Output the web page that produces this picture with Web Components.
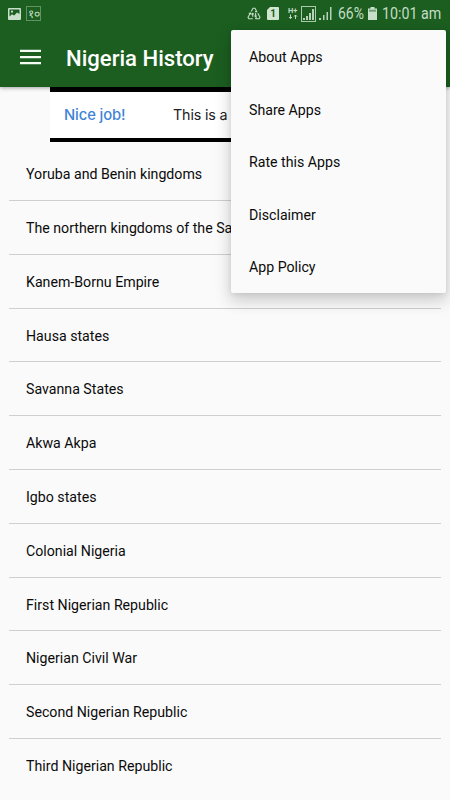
<!DOCTYPE html>
<html lang="en">
<head>
<meta charset="utf-8">
<title>Nigeria History</title>
<style>
html,body{margin:0;height:100%;overflow:hidden;background:#fafafa}
body{font-family:Roboto,"Liberation Sans",sans-serif;color:#0b0b0b}
</style>
</head>
<body>
<app-screen></app-screen>
<script>
const define = (name, html, setup) => customElements.define(name, class extends HTMLElement {
  constructor() {
    super();
    const t = document.createElement('template');
    t.innerHTML = html;
    this.attachShadow({mode: 'open'}).appendChild(t.content.cloneNode(true));
  }
  connectedCallback() { if (setup) setup(this, this.shadowRoot); }
});

define('status-bar', `
<style>
:host{display:flex;height:27px;box-sizing:border-box;padding:0 9px 0 8px;align-items:center;color:#c3dcc4;font-size:16px;line-height:29px;white-space:nowrap}
svg{display:block;flex:none}
.box{box-sizing:border-box;width:15px;height:15px;margin-left:5px;border:1px solid #5f9462;font-size:12px;line-height:14px;text-align:center;overflow:hidden;display:flex;justify-content:center}
.sp{flex:1}
.num{box-sizing:border-box;width:12px;height:13px;margin-left:6px;background:#d0e6d0;color:#1b5e20;font-weight:700;font-size:10px;line-height:14px;text-align:center;border-radius:1px;clip-path:polygon(3px 0,100% 0,100% 100%,0 100%,0 3px)}
.net{margin-left:9px;width:10px;display:flex;flex-direction:column;font-size:7.5px;line-height:7px;font-weight:700}
.pct{margin-left:5px;width:26px;transform:scaleX(.87);transform-origin:0 50%}
.time{margin-left:5px;width:59px;transform:scaleX(.89);transform-origin:0 50%}
</style>
<svg width="13" height="12" viewBox="0 0 13 12"><rect width="13" height="12" rx="1" fill="#c8dfc9"/><path d="M1.5 1.5h10V6L9 4.6 6.2 7.4 4 6.3 1.5 8.6z" fill="#1b5e20"/><circle cx="4" cy="3.7" r="1.1" fill="#c8dfc9"/></svg>
<div class="box">१०</div>
<div class="sp"></div>
<svg width="14" height="13" viewBox="0 0 14 13" fill="none" stroke="#c3dcc4" stroke-width="1.1"><path d="M4.2 4.6L6 1.3h2l1.8 3.3H8M10.8 6.3l2.2 3.9-.8 1.6H8.3M9.6 10.4l-1.3 1.4M5.8 11.8H1.8L1 10.2l2.4-4.2M1.8 6.6l1.7-.7.7 1.7M5.7 9.8V6.3M4.6 7.4l1.1-1.2 1.1 1.2M8.6 6v3.6M7.5 8.6l1.1 1.2 1.1-1.2"/></svg>
<div class="num">1</div>
<div class="net"><span>H+</span><svg width="10" height="6" viewBox="0 0 10 6" fill="none" stroke="#c3dcc4"><path d="M2.5 .5v4M1 3l1.5 1.6L4 3M7.5 5V1M6 2.6L7.5 1 9 2.6"/></svg></div>
<svg style="margin-left:3px" width="15" height="16" viewBox="0 0 15 16"><rect x=".5" y=".5" width="14" height="15" fill="none" stroke="#a9cbab"/><path d="M2 12h2v2H2zM5 10h2v4H5zM8 7h2v7H8zM11 3h2v11h-2z" fill="#b5d2b6"/></svg>
<svg style="margin-left:3px" width="14" height="13" viewBox="0 0 14 13"><path d="M0 11h2v2H0zM4 8h1.5v5H4zM7.5 5H9v8H7.5zM11 0h1.5v13H11z" fill="#b5d2b6"/></svg>
<div class="pct">66%</div>
<svg style="margin-left:4px" width="9" height="13" viewBox="0 0 9 13"><path d="M2.5 0h4v1.5H9V13H0V1.5h2.5z" fill="#c8dfc9"/><path d="M1 2.7h7v2H1z" fill="#6d9f70"/></svg>
<div class="time">10:01 am</div>`);

define('app-toolbar', `
<style>
:host{display:flex;height:60px;align-items:center;padding-left:20px;color:#fff}
svg{display:block;flex:none;margin-top:-1px}
h1{margin:1px 0 0 25px;font:500 22.1px/28px Roboto,sans-serif;white-space:nowrap}
</style>
<svg width="21" height="16" viewBox="0 0 21 16" fill="#f3fbf3"><path d="M0 .7h21v2.3H0zM0 6.9h21v2.3H0zM0 13h21v2.3H0z"/></svg>
<h1><slot></slot></h1>`);

define('ad-banner', `
<style>
:host{display:flex;position:relative;box-sizing:border-box;width:350px;height:55px;margin-left:50px;border:solid #000;border-width:5px 0 4px;background:#fff;align-items:center;font:14.8px/20px Inter,"Open Sans",sans-serif;white-space:nowrap}
.a{margin-left:14px;width:62px;color:#4083d6;font-weight:500;letter-spacing:-.1px}
.b{margin-left:47px;color:#202124;font-size:14.3px;letter-spacing:-.15px}
</style>
<span class="a"><slot name="label"></slot></span><span class="b"><slot></slot></span>`);

define('list-item', `
<style>
:host{display:block;box-sizing:border-box;height:53.8px;padding:0 17px;border-bottom:1px solid #cfcfcf;font-size:14.18px;line-height:54.2px;white-space:nowrap}
:host(:last-child){border-color:transparent}
</style><slot></slot>`);

define('topic-list', `
<style>:host{display:block;margin:5.2px 9px 0}</style>`, (el, root) => {
  ['Yoruba and Benin kingdoms','The northern kingdoms of the Sa','Kanem-Bornu Empire','Hausa states','Savanna States','Akwa Akpa','Igbo states','Colonial Nigeria','First Nigerian Republic','Nigerian Civil War','Second Nigerian Republic','Third Nigerian Republic'].forEach(s => {
    const i = document.createElement('list-item'); i.textContent = s; root.append(i);
  });
});

define('menu-item', `
<style>:host{display:block;height:52.5px;line-height:53px;padding-left:18px;font-size:14.16px;white-space:nowrap}</style><slot></slot>`);

define('overflow-menu', `
<style>
:host{position:absolute;z-index:2;left:231px;top:30px;width:215px;height:263px;box-sizing:border-box;padding-top:1px;background:#fafafa;border-radius:2px;box-shadow:0 7px 16px 1px rgba(0,0,0,.19),0 1px 5px rgba(0,0,0,.08)}
</style><slot></slot>`);

define('app-screen', `
<style>
:host{display:block;position:relative;width:450px;height:800px;overflow:hidden;background:#fafafa}
header{background:#1b5e20;height:87px;box-shadow:0 1px 4px rgba(0,0,0,.35)}
</style>
<header><status-bar></status-bar><app-toolbar>Nigeria History</app-toolbar></header>
<ad-banner><span slot="label">Nice job!</span>This is a</ad-banner>
<topic-list></topic-list>
<overflow-menu>
<menu-item>About Apps</menu-item><menu-item>Share Apps</menu-item><menu-item>Rate this Apps</menu-item><menu-item>Disclaimer</menu-item><menu-item>App Policy</menu-item>
</overflow-menu>`);
</script>
</body>
</html>
